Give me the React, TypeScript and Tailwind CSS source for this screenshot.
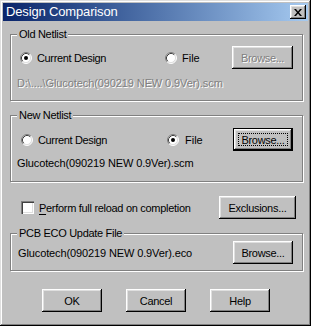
import React from 'react';

const raised =
  'shadow-[inset_-1px_-1px_0_#000,inset_1px_1px_0_#fff,inset_-2px_-2px_0_#808080,inset_2px_2px_0_#dfdfdf]';

const Radio = ({ checked }: { checked?: boolean }) => (
  <svg width="12" height="12" viewBox="0 0 12 12" className="shrink-0">
    <circle cx="6" cy="6" r="5" fill="#fff" />
    <path d="M2.11 9.89 A5.5 5.5 0 0 1 9.89 2.11" fill="none" stroke="#808080" strokeWidth="1" />
    <path d="M9.89 2.11 A5.5 5.5 0 0 1 2.11 9.89" fill="none" stroke="#fff" strokeWidth="1" />
    <path d="M2.82 9.18 A4.5 4.5 0 0 1 9.18 2.82" fill="none" stroke="#404040" strokeWidth="1" />
    <path d="M9.18 2.82 A4.5 4.5 0 0 1 2.82 9.18" fill="none" stroke="#dfdfdf" strokeWidth="1" />
    {checked && <circle cx="6" cy="6" r="2" fill="#000" />}
  </svg>
);

const Button = ({
  label,
  width,
  disabled,
  isDefault,
}: {
  label: string;
  width: string;
  disabled?: boolean;
  isDefault?: boolean;
}) => {
  if (isDefault) {
    return (
      <div className={`${width} h-[23px] shrink-0 border border-black bg-[#c0c0c0] ${raised} p-[4px]`}>
        <div className="h-full w-full border border-dotted border-black flex items-center justify-center">
          <span className="tracking-[-0.3px]">{label}</span>
        </div>
      </div>
    );
  }
  return (
    <div className={`${width} h-[23px] shrink-0 bg-[#c0c0c0] ${raised} flex items-center justify-center`}>
      <span
        className={
          disabled
            ? 'tracking-[-0.3px] text-[#808080] [text-shadow:1px_1px_0_#fff]'
            : 'tracking-[-0.3px]'
        }
      >
        {label}
      </span>
    </div>
  );
};

const Group = ({ title, children, className }: { title: string; children: React.ReactNode; className: string }) => (
  <fieldset
    className={`border border-[#808080] shadow-[inset_1px_1px_0_#fff,1px_1px_0_#fff] pl-[6px] pr-[9px] ${className}`}
  >
    <legend className="px-[2px] leading-[14px] tracking-[-0.3px] bg-[#c0c0c0]">{title}</legend>
    {children}
  </fieldset>
);

const App = () => {
  return (
    <div className="w-[311px] h-[326px] bg-[#c0c0c0] p-[3px] flex flex-col text-[11px] leading-[14px] text-black font-['Liberation_Sans',Arial,sans-serif] shadow-[inset_-1px_-1px_0_#000,inset_1px_1px_0_#dfdfdf,inset_-2px_-2px_0_#808080,inset_2px_2px_0_#fff]">
      {/* title bar */}
      <div className="h-[18px] flex items-center justify-between bg-gradient-to-r from-[#0a246a] to-[#a6caf0] pl-[3px] pr-[2px]">
        <span className="text-white text-[13px] leading-[18px] tracking-[-0.15px]">Design Comparison</span>
        <div className={`w-[16px] h-[14px] bg-[#c0c0c0] ${raised} flex items-center justify-center`}>
          <svg width="8" height="7" viewBox="0 0 8 7">
            <path d="M0 0h2l2 2.5L6 0h2L5 3.5 8 7H6L4 4.5 2 7H0l3-3.5z" fill="#000" />
          </svg>
        </div>
      </div>

      <div className="flex flex-col pl-[7px] pr-[5px]">
        <Group title="Old Netlist" className="mt-[6px] pt-[5px] pb-[10px]">
          <div className="flex items-center h-[23px]">
            <div className="flex items-center gap-[5px] w-[145px] ml-[3px]">
              <Radio checked />
              <span className="tracking-[-0.35px]">Current Design</span>
            </div>
            <div className="flex items-center gap-[5px]">
              <Radio />
              <span>File</span>
            </div>
            <div className="ml-auto">
              <Button label="Browse..." width="w-[61px]" disabled />
            </div>
          </div>
          <div className="mt-[7px] text-[#808080] [text-shadow:1px_1px_0_#fff] tracking-[-0.1px]">
            {'D:\\....\\Glucotech(090219 NEW 0.9Ver).scm'}
          </div>
        </Group>

        <Group title="New Netlist" className="mt-[7px] pt-[6px] pb-[11px]">
          <div className="flex items-center h-[23px]">
            <div className="flex items-center gap-[5px] w-[146px] ml-[4px]">
              <Radio />
              <span className="tracking-[-0.35px]">Current Design</span>
            </div>
            <div className="flex items-center gap-[6px]">
              <Radio checked />
              <span>File</span>
            </div>
            <div className="ml-auto">
              <Button label="Browse..." width="w-[60px]" isDefault />
            </div>
          </div>
          <div className="mt-[5px] tracking-[-0.12px]">Glucotech(090219 NEW 0.9Ver).scm</div>
        </Group>

        <div className="mt-[14px] h-[23px] flex items-center pl-[11px] pr-[7px]">
          <div className="w-[13px] h-[13px] bg-white shrink-0 shadow-[inset_1px_1px_0_#808080,inset_2px_2px_0_#404040,inset_-1px_-1px_0_#fff,inset_-2px_-2px_0_#dfdfdf]" />
          <span className="ml-[5px] tracking-[-0.3px]">
            <span className="underline underline-offset-2">P</span>erform full reload on completion
          </span>
          <div className="ml-auto">
            <Button label="Exclusions..." width="w-[77px]" />
          </div>
        </div>

        <Group title="PCB ECO Update File" className="mt-[7px] pt-[1px] pb-[6px]">
          <div className="flex items-center h-[23px] pl-[1px]">
            <span className="tracking-[-0.12px]">Glucotech(090219 NEW 0.9Ver).eco</span>
            <div className="ml-auto">
              <Button label="Browse..." width="w-[60px]" />
            </div>
          </div>
        </Group>
      </div>

      <div className="mt-[18px] flex justify-center gap-[24px] pl-[1px]">
        <Button label="OK" width="w-[60px]" />
        <Button label="Cancel" width="w-[60px]" />
        <Button label="Help" width="w-[60px]" />
      </div>
    </div>
  );
};

export default App;
